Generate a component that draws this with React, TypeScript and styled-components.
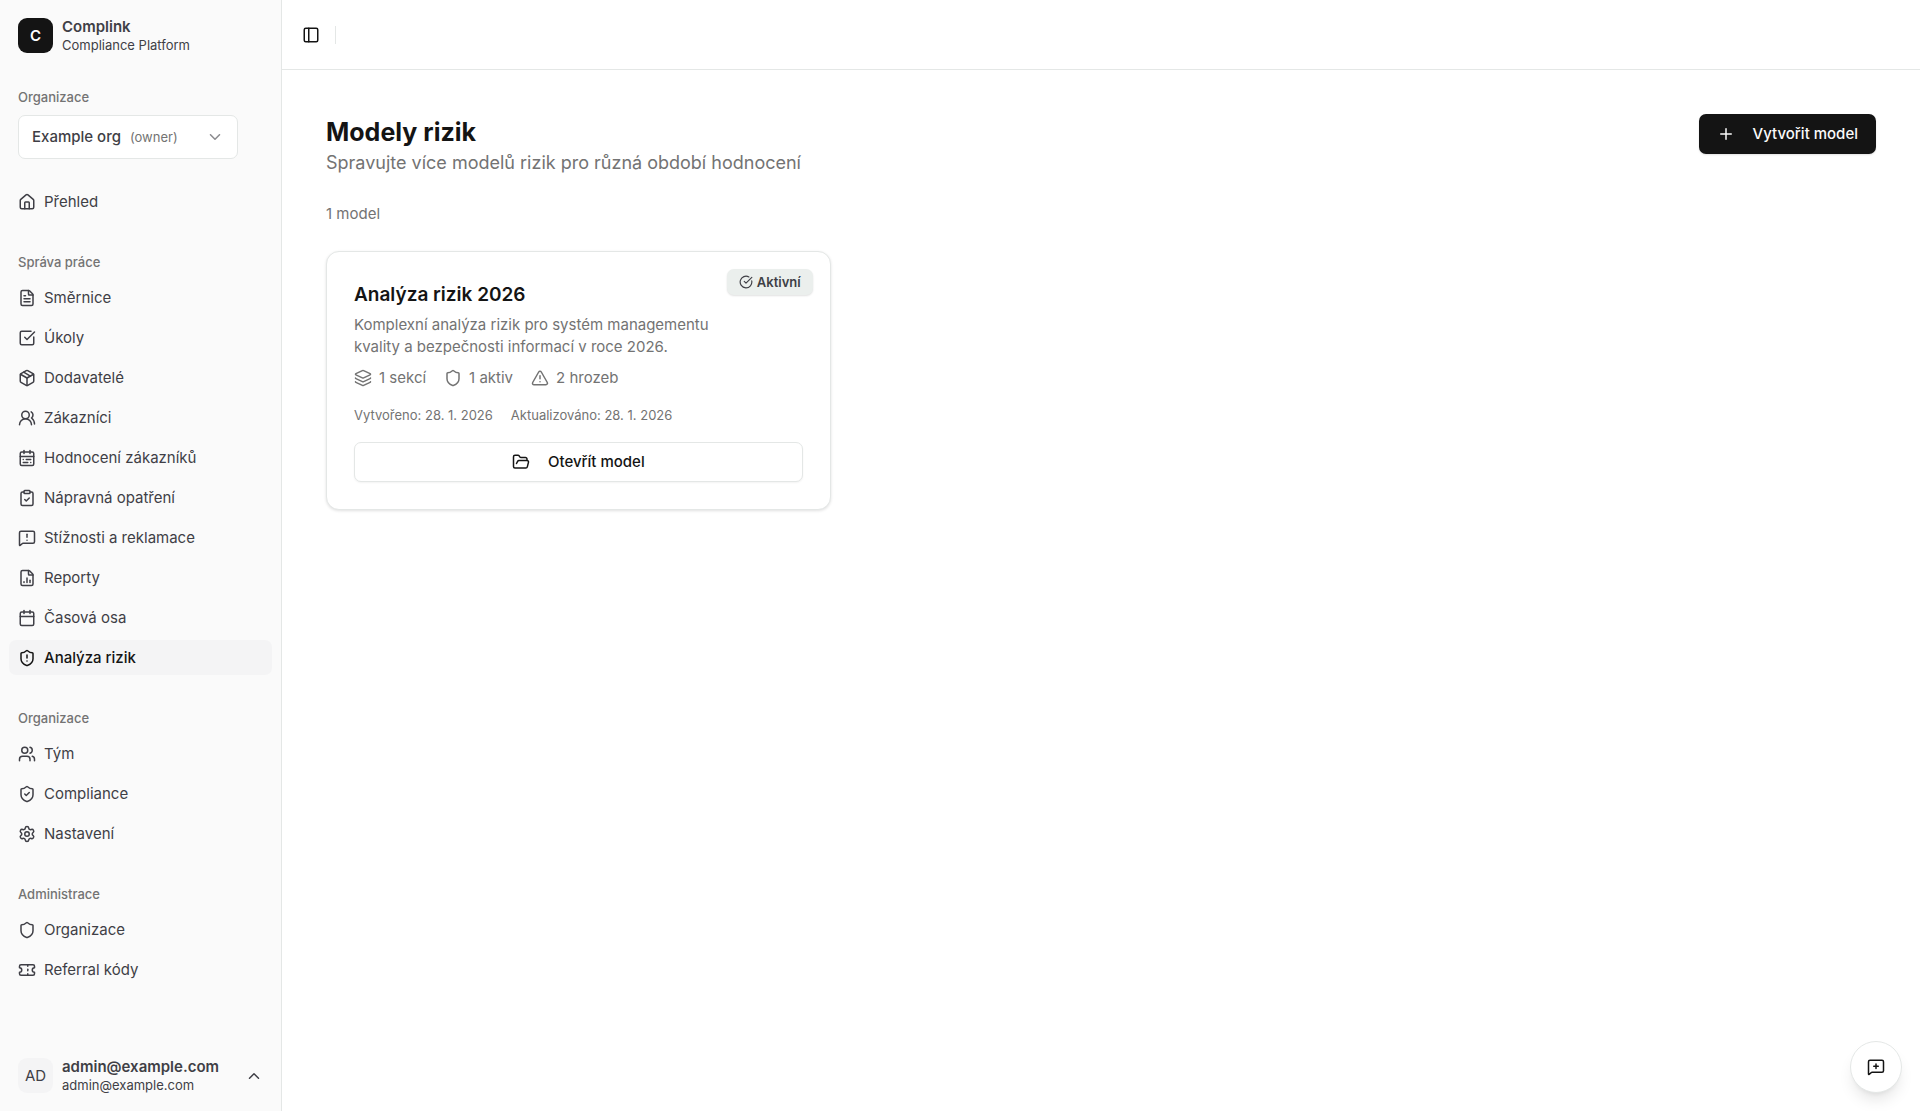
import React from "react";
import styled, { createGlobalStyle } from "styled-components";
import {
  Calendar,
  CalendarRange,
  ChevronDown,
  ChevronUp,
  CircleCheckBig,
  ClipboardCheck,
  FileChartColumn,
  FileText,
  FolderOpen,
  House,
  Layers,
  MessageSquarePlus,
  MessageSquareWarning,
  Package,
  PanelLeft,
  Plus,
  Settings,
  Shield,
  ShieldAlert,
  ShieldCheck,
  SquareCheckBig,
  Ticket,
  TriangleAlert,
  Users,
  UsersRound,
  type LucideIcon,
} from "lucide-react";

const color = {
  page: "#ffffff",
  sidebar: "#fafafa",
  sidebarText: "#3f3f46",
  accent: "#f4f4f5",
  ink: "#141414",
  muted: "#737373",
  border: "#e4e7e6",
  badge: "#ebefed",
};

const GlobalStyle = createGlobalStyle`
  *, *::before, *::after { box-sizing: border-box; }
  body {
    margin: 0;
    background: ${color.page};
    color: ${color.ink};
    font-family: Inter, "Liberation Sans", sans-serif;
    font-size: 15px;
    line-height: 22px;
  }
  h1, h2, p, ul { margin: 0; padding: 0; }
  ul { list-style: none; }
  button, select { font: inherit; color: inherit; cursor: pointer; }
  svg { flex-shrink: 0; }
`;

const Shell = styled.div`
  display: flex;
  min-height: 100vh;
`;

const Sidebar = styled.aside`
  position: sticky;
  top: 0;
  display: flex;
  flex-direction: column;
  flex-shrink: 0;
  width: 282px;
  height: 100vh;
  background: ${color.sidebar};
  border-right: 1px solid ${color.border};
  color: ${color.sidebarText};
`;

const Brand = styled.div`
  display: flex;
  align-items: center;
  gap: 9px;
  padding: 17px 18px 0;
`;

const Tile = styled.span<{ $dark?: boolean }>`
  display: flex;
  align-items: center;
  justify-content: center;
  width: 35px;
  height: 35px;
  border-radius: 9px;
  background: ${(p) => (p.$dark ? color.ink : color.accent)};
  color: ${(p) => (p.$dark ? "#ffffff" : "inherit")};
  font-weight: ${(p) => (p.$dark ? 600 : 400)};
`;

const TwoLines = styled.span`
  display: flex;
  flex: 1;
  flex-direction: column;
  min-width: 0;
  text-align: left;
`;

const LineStrong = styled.span`
  font-weight: 600;
  line-height: 19px;
`;

const LineSmall = styled.span`
  font-size: 13px;
  line-height: 18px;
`;

const OrgPicker = styled.div`
  display: flex;
  flex-direction: column;
  gap: 9px;
  padding: 34px 43px 0 18px;
`;

const OrgLabel = styled.label`
  color: ${color.muted};
  font-size: 13px;
  font-weight: 500;
  line-height: 18px;
`;

const OrgField = styled.div`
  display: flex;
  align-items: center;
  gap: 9px;
  height: 44px;
  padding: 0 13px;
  border: 1px solid ${color.border};
  border-radius: 7px;
  background: ${color.page};

  svg {
    margin-left: auto;
    opacity: 0.6;
  }
`;

const OrgSelect = styled.select`
  appearance: none;
  field-sizing: content;
  padding: 0;
  border: 0;
  background: transparent;
  font-weight: 500;
`;

const Role = styled.span`
  color: ${color.muted};
  font-size: 13px;
`;

const Nav = styled.nav`
  flex: 1;
  padding: 25px 9px 0;
`;

const Group = styled.section`
  & + & {
    margin-top: 26px;
  }
`;

const GroupTitle = styled.h2`
  padding: 0 9px;
  color: ${color.muted};
  font-size: 13px;
  font-weight: 500;
  line-height: 35px;
`;

const NavList = styled.ul`
  display: flex;
  flex-direction: column;
  gap: 5px;
`;

const NavLink = styled.a<{ $active?: boolean }>`
  display: flex;
  align-items: center;
  gap: 8px;
  height: 35px;
  padding: 0 9px;
  border-radius: 7px;
  background: ${(p) => (p.$active ? color.accent : "transparent")};
  color: ${(p) => (p.$active ? color.ink : "inherit")};
  font-weight: ${(p) => (p.$active ? 500 : 400)};
  text-decoration: none;
`;

const Account = styled.button`
  display: flex;
  align-items: center;
  gap: 9px;
  margin: 8px 9px;
  padding: 9px;
  border: 0;
  background: transparent;
`;

const Main = styled.div`
  flex: 1;
  min-width: 0;
`;

const TopBar = styled.header`
  display: flex;
  align-items: center;
  gap: 9px;
  height: 70px;
  padding: 0 13px;
  border-bottom: 1px solid ${color.border};
`;

const IconButton = styled.button`
  display: flex;
  align-items: center;
  justify-content: center;
  width: 31px;
  height: 31px;
  padding: 0;
  border: 0;
  background: transparent;
`;

const Divider = styled.span`
  width: 1px;
  height: 18px;
  background: ${color.border};
`;

const Content = styled.main`
  padding: 44px;
`;

const PageHead = styled.div`
  display: flex;
  align-items: flex-start;
  justify-content: space-between;
`;

const Title = styled.h1`
  font-size: 25px;
  font-weight: 700;
  line-height: 36px;
`;

const Subtitle = styled.p`
  color: ${color.muted};
  font-size: 18px;
  line-height: 26px;
`;

const Button = styled.button<{ $outline?: boolean }>`
  display: flex;
  align-items: center;
  justify-content: center;
  gap: 18px;
  height: 40px;
  padding: 0 18px;
  border: ${(p) => (p.$outline ? `1px solid ${color.border}` : "0")};
  border-radius: 7px;
  background: ${(p) => (p.$outline ? color.page : color.ink)};
  color: ${(p) => (p.$outline ? color.ink : "#fafafa")};
  font-weight: 500;
  box-shadow: 0 1px 2px rgba(0, 0, 0, ${(p) => (p.$outline ? 0.05 : 0.12)});
`;

const Count = styled.p`
  margin-top: 27px;
  color: ${color.muted};
`;

const Grid = styled.div`
  display: grid;
  grid-template-columns: repeat(3, minmax(0, 1fr));
  gap: 18px;
  margin-top: 26px;
`;

const Card = styled.article`
  position: relative;
  display: flex;
  flex-direction: column;
  padding: 27px;
  border: 1px solid ${color.border};
  border-radius: 13px;
  background: ${color.page};
  box-shadow: 0 1px 3px rgba(0, 0, 0, 0.12);
`;

const Badge = styled.span`
  position: absolute;
  top: 17px;
  right: 17px;
  display: flex;
  align-items: center;
  gap: 4px;
  height: 26px;
  padding: 0 12px;
  border-radius: 7px;
  background: ${color.badge};
  color: ${color.sidebarText};
  font-size: 13px;
  font-weight: 600;
  box-shadow: 0 1px 2px rgba(0, 0, 0, 0.12);
`;

const CardTitle = styled.h2`
  font-size: 19px;
  font-weight: 600;
  line-height: 31px;
`;

const CardText = styled.p`
  margin-top: 4px;
  padding-right: 70px;
  color: ${color.muted};
`;

const Stats = styled.ul`
  display: flex;
  gap: 18px;
  margin-top: 9px;
  color: ${color.muted};
`;

const Stat = styled.li`
  display: flex;
  align-items: center;
  gap: 7px;
`;

const Dates = styled.div`
  display: flex;
  gap: 18px;
  margin: 17px 0 18px;
  color: ${color.muted};
  font-size: 13px;
  line-height: 18px;
`;

const FeedbackButton = styled.button`
  position: fixed;
  right: 18px;
  bottom: 18px;
  display: flex;
  align-items: center;
  justify-content: center;
  width: 52px;
  height: 52px;
  padding: 0;
  border: 1px solid ${color.border};
  border-radius: 50%;
  background: ${color.page};
  box-shadow: 0 10px 15px -3px rgba(0, 0, 0, 0.1), 0 4px 6px -4px rgba(0, 0, 0, 0.1);
`;

type Item = { icon: LucideIcon; label: string; active?: boolean };

const groups: { title?: string; items: Item[] }[] = [
  { items: [{ icon: House, label: "Přehled" }] },
  {
    title: "Správa práce",
    items: [
      { icon: FileText, label: "Směrnice" },
      { icon: SquareCheckBig, label: "Úkoly" },
      { icon: Package, label: "Dodavatelé" },
      { icon: UsersRound, label: "Zákazníci" },
      { icon: CalendarRange, label: "Hodnocení zákazníků" },
      { icon: ClipboardCheck, label: "Nápravná opatření" },
      { icon: MessageSquareWarning, label: "Stížnosti a reklamace" },
      { icon: FileChartColumn, label: "Reporty" },
      { icon: Calendar, label: "Časová osa" },
      { icon: ShieldAlert, label: "Analýza rizik", active: true },
    ],
  },
  {
    title: "Organizace",
    items: [
      { icon: Users, label: "Tým" },
      { icon: ShieldCheck, label: "Compliance" },
      { icon: Settings, label: "Nastavení" },
    ],
  },
  {
    title: "Administrace",
    items: [
      { icon: Shield, label: "Organizace" },
      { icon: Ticket, label: "Referral kódy" },
    ],
  },
];

const stats: Item[] = [
  { icon: Layers, label: "1 sekcí" },
  { icon: Shield, label: "1 aktiv" },
  { icon: TriangleAlert, label: "2 hrozeb" },
];

export default function App() {
  return (
    <>
      <GlobalStyle />
      <Shell>
        <Sidebar>
          <Brand>
            <Tile $dark>C</Tile>
            <TwoLines>
              <LineStrong>Complink</LineStrong>
              <LineSmall>Compliance Platform</LineSmall>
            </TwoLines>
          </Brand>
          <OrgPicker>
            <OrgLabel htmlFor="org">Organizace</OrgLabel>
            <OrgField>
              <OrgSelect id="org">
                <option>Example org</option>
              </OrgSelect>
              <Role>(owner)</Role>
              <ChevronDown size={18} />
            </OrgField>
          </OrgPicker>
          <Nav>
            {groups.map((group, i) => (
              <Group key={i}>
                {group.title && <GroupTitle>{group.title}</GroupTitle>}
                <NavList>
                  {group.items.map(({ icon: Icon, label, active }) => (
                    <li key={label}>
                      <NavLink href="#" $active={active} aria-current={active ? "page" : undefined}>
                        <Icon size={18} />
                        {label}
                      </NavLink>
                    </li>
                  ))}
                </NavList>
              </Group>
            ))}
          </Nav>
          <Account type="button">
            <Tile>AD</Tile>
            <TwoLines>
              <LineStrong>admin@example.com</LineStrong>
              <LineSmall>admin@example.com</LineSmall>
            </TwoLines>
            <ChevronUp size={18} />
          </Account>
        </Sidebar>
        <Main>
          <TopBar>
            <IconButton type="button" aria-label="Toggle Sidebar">
              <PanelLeft size={18} />
            </IconButton>
            <Divider />
          </TopBar>
          <Content>
            <PageHead>
              <div>
                <Title>Modely rizik</Title>
                <Subtitle>Spravujte více modelů rizik pro různá období hodnocení</Subtitle>
              </div>
              <Button type="button">
                <Plus size={18} />
                Vytvořit model
              </Button>
            </PageHead>
            <Count>1 model</Count>
            <Grid>
              <Card>
                <Badge>
                  <CircleCheckBig size={14} />
                  Aktivní
                </Badge>
                <CardTitle>Analýza rizik 2026</CardTitle>
                <CardText>
                  Komplexní analýza rizik pro systém managementu kvality a bezpečnosti informací v roce 2026.
                </CardText>
                <Stats>
                  {stats.map(({ icon: Icon, label }) => (
                    <Stat key={label}>
                      <Icon size={18} />
                      {label}
                    </Stat>
                  ))}
                </Stats>
                <Dates>
                  <span>Vytvořeno: 28. 1. 2026</span>
                  <span>Aktualizováno: 28. 1. 2026</span>
                </Dates>
                <Button type="button" $outline>
                  <FolderOpen size={18} />
                  Otevřít model
                </Button>
              </Card>
            </Grid>
          </Content>
        </Main>
      </Shell>
      <FeedbackButton type="button" aria-label="Feedback">
        <MessageSquarePlus size={18} />
      </FeedbackButton>
    </>
  );
}
